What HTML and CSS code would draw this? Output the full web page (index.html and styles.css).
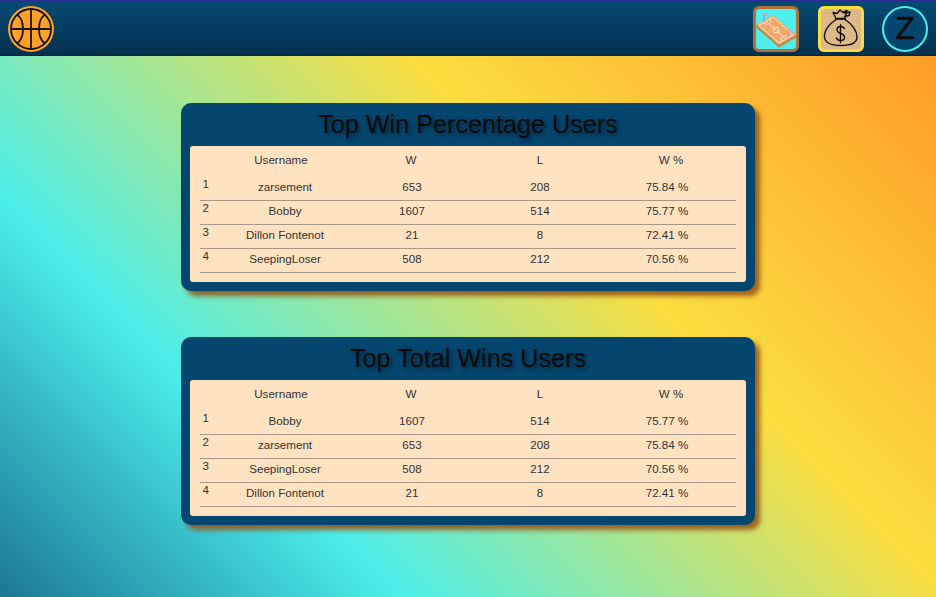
FILE: index.html
```html
<!DOCTYPE html>
<html lang="en">
<head>
<meta charset="utf-8">
<title>Leaderboard</title>
<link rel="stylesheet" href="styles.css">
</head>
<body>
<header class="topbar">
  <svg class="logo" viewBox="0 0 46 46" width="46" height="46">
    <circle cx="23" cy="23" r="23" fill="#ffa028"/>
    <g fill="none" stroke="#141414" stroke-width="1.8">
      <circle cx="23" cy="23" r="20"/>
      <path d="M23 3V43M3 23H43"/>
      <path d="M9 8.500C17 14 17 32 9 37.500"/>
      <path d="M37 8.500C29 14 29 32 37 37.500"/>
    </g>
  </svg>
  <div class="actions">
    <div class="tile tile-court">
      <svg viewBox="0 0 40 40" width="40" height="40">
        <path d="M0 16L17 6L40 26L23 36Z" fill="#f0a868"/>
        <path d="M0 16L23 36L40 26V28.500L23 38.500L0 18.500Z" fill="#c9813f"/>
        <g fill="none" stroke="#fde8d2" stroke-width="0.9">
          <path d="M3 16.200L17 8L37 25.800L23 34Z"/>
          <path d="M10 12L30 30"/>
          <circle cx="20" cy="21" r="3"/>
          <path d="M7 14C13 17 16 14 14 9.500M33 28C27 25 23 28 26 32"/>
        </g>
        <path d="M8 13V5" stroke="#9a9ac0" stroke-width="1.200"/>
        <path d="M8 4h3v2.500h-3z" fill="#d8a0a8"/>
        <path d="M32 29V21" stroke="#c8a0b0" stroke-width="1.200"/>
        <path d="M32 20h3v2.500h-3z" fill="#e0a0b0"/>
      </svg>
    </div>
    <div class="tile tile-money">
      <svg viewBox="0 0 40 40" width="40" height="40">
        <g fill="none" stroke="#111" stroke-width="1.400" stroke-linejoin="round" stroke-linecap="round">
          <path d="M12 3.500L16 4.500L19 1L22 3.500L26 1.500L24 9.500H15Z"/>
          <path d="M23 4L29 3L28 6.500L23.500 7.500"/>
          <path d="M14.500 10H24.500"/>
          <path d="M15 10.500C8 15 3 22 3.500 28C4 34 10 36.500 20 36.500C30 36.500 36 34 36 28C36 22 31 15 24 10.500"/>
          <path d="M23.500 19.500C22.500 18 21.500 17.500 19.500 17.500C17 17.500 16 19 16 21C16 23 17.500 23.500 19.500 24.500C21.500 25 23.500 26 23.500 28.200C23.500 30.200 22 31.500 19.500 31.500C17.500 31.500 16 30.500 15.500 29M19.500 15.500V33.500"/>
        </g>
      </svg>
    </div>
    <div class="avatar">Z</div>
  </div>
</header>
<main class="content">
  <section class="card">
    <h2 class="card-title">Top Win Percentage Users</h2>
    <div class="sheet">
      <div class="row head"><span></span><span>Username</span><span>W</span><span>L</span><span>W %</span></div>
      <div class="row"><span class="rank">1</span><span>zarsement</span><span>653</span><span>208</span><span>75.84 %</span></div>
      <div class="row"><span class="rank">2</span><span>Bobby</span><span>1607</span><span>514</span><span>75.77 %</span></div>
      <div class="row"><span class="rank">3</span><span>Dillon Fontenot</span><span>21</span><span>8</span><span>72.41 %</span></div>
      <div class="row"><span class="rank">4</span><span>SeepingLoser</span><span>508</span><span>212</span><span>70.56 %</span></div>
    </div>
  </section>
  <section class="card">
    <h2 class="card-title">Top Total Wins Users</h2>
    <div class="sheet">
      <div class="row head"><span></span><span>Username</span><span>W</span><span>L</span><span>W %</span></div>
      <div class="row"><span class="rank">1</span><span>Bobby</span><span>1607</span><span>514</span><span>75.77 %</span></div>
      <div class="row"><span class="rank">2</span><span>zarsement</span><span>653</span><span>208</span><span>75.84 %</span></div>
      <div class="row"><span class="rank">3</span><span>SeepingLoser</span><span>508</span><span>212</span><span>70.56 %</span></div>
      <div class="row"><span class="rank">4</span><span>Dillon Fontenot</span><span>21</span><span>8</span><span>72.41 %</span></div>
    </div>
  </section>
</main>
</body>
</html>
```
FILE: styles.css
```css
* { box-sizing: border-box; }
html, body { margin: 0; height: 100%; }
body {
  width: 936px;
  height: 597px;
  overflow: hidden;
  font-family: "Liberation Sans", Arial, sans-serif;
  background: linear-gradient(45deg, #1c7795 0%, #4aeeea 26%, #fbde40 62%, #ff9d26 96%);
}
.topbar {
  height: 56px;
  display: flex;
  justify-content: space-between;
  align-items: center;
  padding: 1px 8px 0 8px;
  background: linear-gradient(to bottom, #064a72, #04304e);
  border-top: 1px solid #2e2a96;
  border-bottom: 1px solid #06263c;
}
.logo { display: block; }
.actions { display: flex; gap: 18.5px; align-items: center; }
.tile {
  width: 46px;
  height: 46px;
  border-radius: 6px;
  border: 3px solid;
  display: flex;
  align-items: center;
  justify-content: center;
}
.tile-court { background: #4eeeee; border-color: #b0703c; }
.tile-money { background: #deb887; border-color: #fbdc40; }
.avatar {
  width: 46px;
  height: 46px;
  border-radius: 50%;
  border: 2px solid #4aeeea;
  background: #05466f;
  color: #0a0a0a;
  display: flex;
  align-items: center;
  justify-content: center;
  font-size: 32px;
  -webkit-text-stroke: 0.5px #0a0a0a;
}
.content {
  display: flex;
  flex-direction: column;
  align-items: center;
  gap: 46px;
  padding-top: 46.5px;
}
.card {
  width: 574px;
  height: 188.3px;
  background: #05466f;
  border-radius: 10px;
  padding: 0 9px;
  box-shadow: 5px 5px 5px rgba(150, 84, 24, 0.9);
}
.card-title {
  margin: 0;
  height: 43.5px;
  line-height: 43.5px;
  text-align: center;
  font-size: 25.2px;
  font-weight: 400;
  color: #0a0a0a;
  text-shadow: 2px 2px 4px rgba(0, 0, 0, 0.55);
}
.sheet {
  background: #ffe2c0;
  border-radius: 3px;
  height: 135.5px;
  padding: 0 10px 0 9.5px;
  font-size: 11.6px;
  color: #333;
}
.row {
  display: grid;
  grid-template-columns: 28px 115px 139px 117px 137px;
  height: 24px;
  padding-bottom: 4px;
  align-items: center;
  text-align: center;
  border-bottom: 1px solid #a89a88;
}
.row.head { height: 31px; border-bottom: 0; }
.row .rank { text-align: left; padding-left: 3px; margin-top: -6px; }
.head span:nth-child(2) { transform: translateX(-4px); }
.head span:nth-child(3) { transform: translateX(-1px); }
.head span:nth-child(5) { transform: translateX(4px); }
```
